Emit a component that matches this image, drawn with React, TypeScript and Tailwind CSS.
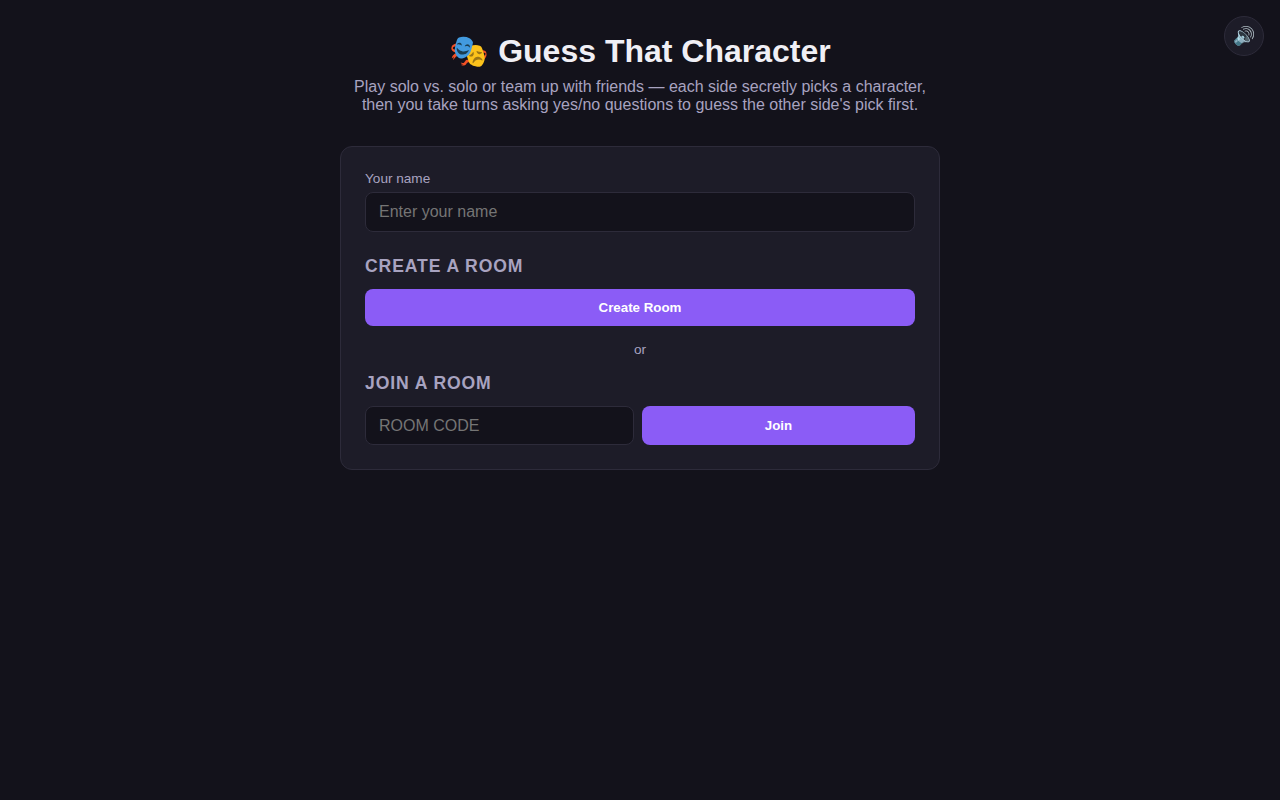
import React from 'react';

const App: React.FC = () => {
  return (
    <div className="relative min-h-screen bg-[#13121b] text-[#f0eff5] font-['Liberation_Sans',Arial,sans-serif]">
      <button className="absolute top-4 right-4 w-10 h-10 rounded-full bg-[#1d1c28] border border-[#2d2b3a] flex items-center justify-center text-lg">
        🔊
      </button>

      <main className="w-[600px] mx-auto pt-8 flex flex-col">
        <header className="text-center mb-8">
          <h1 className="text-[32px] leading-[38px] font-bold mb-2">🎭 Guess That Character</h1>
          <p className="text-base leading-[18px] text-[#a8a3c0]">
            Play solo vs. solo or team up with friends — each side secretly picks a character,
            <br />
            then you take turns asking yes/no questions to guess the other side's pick first.
          </p>
        </header>

        <section className="bg-[#1d1c28] border border-[#2d2b3a] rounded-xl p-6">
          <label className="block text-[13.6px] leading-4 text-[#a8a3c0] mb-[5px]">Your name</label>
          <input
            placeholder="Enter your name"
            className="w-full h-10 px-[13px] rounded-lg bg-[#13121b] border border-[#2d2b3a] text-base placeholder:text-[#757575] outline-none"
          />

          <h2 className="mt-6 mb-[13px] text-[17.6px] leading-5 font-semibold tracking-[0.88px] uppercase text-[#a8a3c0]">Create a Room</h2>
          <button className="w-full h-[37px] rounded-lg bg-[#8b5cf6] text-white text-[13.33px] font-bold">Create Room</button>

          <div className="mt-4 mb-[15px] text-center text-[13.6px] leading-4 text-[#a8a3c0]">or</div>

          <h2 className="mb-[13px] text-[17.6px] leading-5 font-semibold tracking-[0.88px] uppercase text-[#a8a3c0]">Join a Room</h2>
          <div className="flex gap-2">
            <input
              placeholder="ROOM CODE"
              className="w-[269px] h-[39px] px-[13px] rounded-lg bg-[#13121b] border border-[#2d2b3a] text-base placeholder:text-[#757575] outline-none"
            />
            <button className="flex-1 h-[39px] rounded-lg bg-[#8b5cf6] text-white text-[13.33px] font-bold">Join</button>
          </div>
        </section>
      </main>
    </div>
  );
};

export default App;
